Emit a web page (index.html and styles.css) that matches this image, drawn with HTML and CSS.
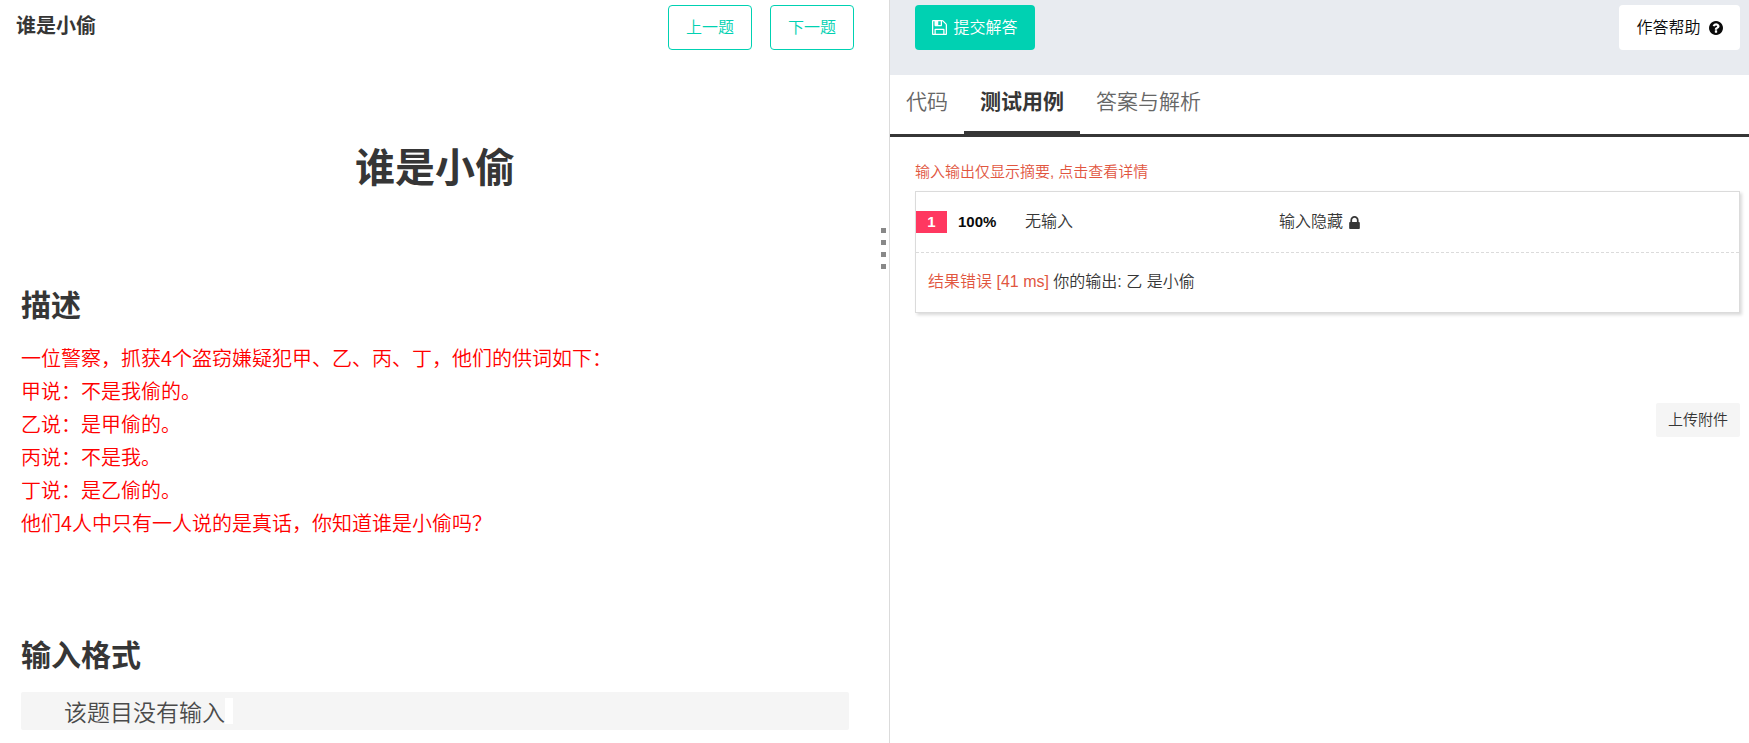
FILE: index.html
```html
<!DOCTYPE html>
<html lang="zh-CN">
<head>
<meta charset="utf-8">
<title>谁是小偷</title>
<link rel="stylesheet" href="styles.css">
</head>
<body>
<div class="workspace">
  <main class="problem">
    <header class="problem-bar">
      <strong class="problem-name">谁是小偷</strong>
      <nav class="pager">
        <button class="button outlined" type="button">上一题</button>
        <button class="button outlined" type="button">下一题</button>
      </nav>
    </header>
    <article class="content">
      <h1 class="title">谁是小偷</h1>
      <section class="section">
        <h2 class="heading">描述</h2>
        <p class="statement">一位警察，抓获4个盗窃嫌疑犯甲、乙、丙、丁，他们的供词如下：<br>甲说：不是我偷的。<br>乙说：是甲偷的。<br>丙说：不是我。<br>丁说：是乙偷的。<br>他们4人中只有一人说的是真话，你知道谁是小偷吗？</p>
      </section>
      <section class="section">
        <h2 class="heading">输入格式</h2>
        <div class="sample">该题目没有输入<span class="sample-end"></span></div>
      </section>
    </article>
    <div class="grip"><i class="dot"></i><i class="dot"></i><i class="dot"></i><i class="dot"></i></div>
  </main>
  <aside class="answer">
    <header class="answer-bar">
      <button class="button primary" type="button">
        <svg class="icon-save" viewBox="0 0 1536 1536" aria-hidden="true"><path fill="currentColor" d="M384 1408h768v-384H384zm896 0h128V512q0-14-10-38.500t-20-34.500l-281-281q-10-10-34-20t-39-10v416q0 40-28 68t-68 28H352q-40 0-68-28t-28-68V128H128v1280h128V992q0-40 28-68t68-28h832q40 0 68 28t28 68zM896 480V160q0-13-9.500-22.500T864 128H672q-13 0-22.500 9.500T640 160v320q0 13 9.500 22.500T672 512h192q13 0 22.500-9.500T896 480zm640 32v928q0 40-28 68t-68 28H96q-40 0-68-28t-28-68V96q0-40 28-68T96 0h928q40 0 88 20t76 48l280 280q28 28 48 76t20 88z"/></svg>
        提交解答
      </button>
      <button class="button plain" type="button">
        作答帮助
        <svg class="icon-help" viewBox="0 0 1536 1536" aria-hidden="true"><path fill="currentColor" d="M896 1248v-192q0-14-9-23t-23-9H672q-14 0-23 9t-9 23v192q0 14 9 23t23 9h192q14 0 23-9t9-23zm256-672q0-88-55.500-163T958 297t-170-41q-243 0-371 213-15 24 8 42l132 100q7 6 19 6 16 0 25-12 53-68 86-92 34-24 86-24 48 0 85.500 26t37.500 59q0 38-20 61t-68 45q-63 28-115.500 86.500T640 892v36q0 14 9 23t23 9h192q14 0 23-9t9-23q0-19 21.500-49.500T972 829q32-18 49-28.500t46-35 44.500-48 28-60.500 12.500-81zm384 192q0 209-103 385.500T1153.500 1433 768 1536t-385.500-103T103 1153.500 0 768t103-385.500T382.500 103 768 0t385.500 103T1433 382.500 1536 768z"/></svg>
      </button>
    </header>
    <nav class="tabs">
      <a class="tab" href="#code">代码</a>
      <a class="tab active" href="#cases" aria-current="page">测试用例</a>
      <a class="tab" href="#solution">答案与解析</a>
    </nav>
    <div class="cases" id="cases">
      <p class="notice">输入输出仅显示摘要, 点击查看详情</p>
      <section class="case">
        <div class="case-row">
          <div class="case-score"><span class="badge">1</span><b class="percent">100%</b></div>
          <span>无输入</span>
          <span class="case-hidden">输入隐藏<svg class="icon-lock" viewBox="0 0 1152 1408" aria-hidden="true"><path fill="currentColor" d="M320 640h512V448q0-106-75-181t-181-75-181 75-75 181zm832 96v576q0 40-28 68t-68 28H96q-40 0-68-28t-28-68V736q0-40 28-68t68-28h32V448q0-184 132-316T576 0t316 132 132 316v192h32q40 0 68 28t28 68z"/></svg></span>
        </div>
        <div class="case-result"><span class="wrong">结果错误 [41 ms]</span> 你的输出: 乙 是小偷</div>
      </section>
      <div class="actions"><button class="button upload" type="button">上传附件</button></div>
    </div>
  </aside>
</div>
</body>
</html>
```
FILE: styles.css
```css
* { box-sizing: border-box; }

body {
  margin: 0;
  background: #fff;
  color: #363636;
  font-family: "Liberation Sans", "Noto Sans CJK SC", sans-serif;
  font-size: 16px;
  font-weight: 350;
  line-height: 24px;
}

h1, h2, p { margin: 0; }

.workspace {
  display: grid;
  grid-template-columns: 890fr 859fr;
  min-height: 100vh;
}

.problem {
  position: relative;
  border-right: 1px solid #dbdbdb;
}

.problem-bar {
  display: flex;
  justify-content: space-between;
  padding: 5px 35px 0 16px;
}

.problem-name {
  font-size: 20px;
  font-weight: 700;
  line-height: 42px;
}

.pager { display: flex; gap: 18px; }

.button {
  display: inline-flex;
  align-items: center;
  justify-content: center;
  height: 45px;
  padding: 0 17px;
  border: 0;
  border-radius: 4px;
  font: inherit;
  white-space: nowrap;
  cursor: pointer;
}

.outlined {
  padding: 0 17px;
  border: 1px solid #00d1b2;
  background: transparent;
  color: #00d1b2;
}

.primary {
  gap: 6px;
  min-width: 120px;
  background: #00d1b2;
  color: #fff;
}

.plain {
  gap: 8px;
  min-width: 121px;
  background: #fff;
  color: #0a0a0a;
}

.content {
  padding: 90px 40px 12px 21px;
  font-family: "Noto Sans CJK SC", sans-serif;
}

.title {
  font-size: 40px;
  font-weight: 700;
  line-height: 50px;
  text-align: center;
}

.section { padding-top: 93px; }

.heading {
  font-size: 30px;
  font-weight: 700;
  line-height: 40px;
}

.statement {
  padding: 18px 0 1px;
  color: #f00;
  font-size: 20px;
  line-height: 33px;
}

.sample {
  display: flex;
  align-items: center;
  height: 38px;
  margin-top: 19px;
  padding-left: 43px;
  border-radius: 2px;
  background: #f5f5f5;
  color: #4a4a4a;
  font-size: 23px;
}

.sample-end {
  width: 8px;
  height: 26px;
  background: #fff;
}

.grip {
  position: absolute;
  top: 228px;
  right: 3px;
  display: grid;
  gap: 7px;
}

.dot {
  width: 5px;
  height: 5px;
  background: #888;
}

.answer-bar {
  display: flex;
  justify-content: space-between;
  height: 75px;
  padding: 5px 9px 0 25px;
  background: #e8ebf0;
}

.icon-save { width: 15px; height: 15px; }
.icon-help { width: 14px; height: 14px; }
.icon-lock { width: 11px; height: 13px; }

.tabs {
  display: flex;
  height: 62px;
  border-bottom: 3px solid #363636;
  font-size: 21px;
}

.tab {
  padding: 15px 16px 0;
  color: #666;
  text-decoration: none;
}

.active {
  border-bottom: 3px solid #363636;
  color: #363636;
  font-weight: 700;
}

.cases { padding: 24px 9px 0 25px; }

.notice {
  color: #e1563f;
  font-size: 15px;
  line-height: 22px;
}

.case {
  margin-top: 8px;
  border: 1px solid #dbdbdb;
  box-shadow: 2px 2px 3px rgba(0, 0, 0, 0.15);
}

.case-row {
  display: grid;
  grid-template-columns: 109px 254fr 460fr;
  align-items: center;
  height: 61px;
  border-bottom: 1px dashed #dbdbdb;
}

.case-score { display: flex; align-items: center; gap: 11px; }

.case-hidden { display: flex; align-items: center; gap: 6px; }

.badge {
  width: 31px;
  background: #ff3860;
  color: #fff;
  font-size: 15px;
  font-weight: 700;
  line-height: 22px;
  text-align: center;
}

.percent {
  color: #0a0a0a;
  font-size: 15px;
  font-weight: 700;
}

.case-result { padding: 17px 12px 18px; }

.wrong { color: #e1563f; }

.actions {
  display: flex;
  justify-content: flex-end;
  padding-top: 90px;
}

.upload {
  height: 34px;
  padding: 0 12px;
  border-radius: 2px;
  background: #f5f5f5;
  color: #363636;
  font-size: 15px;
}
```
